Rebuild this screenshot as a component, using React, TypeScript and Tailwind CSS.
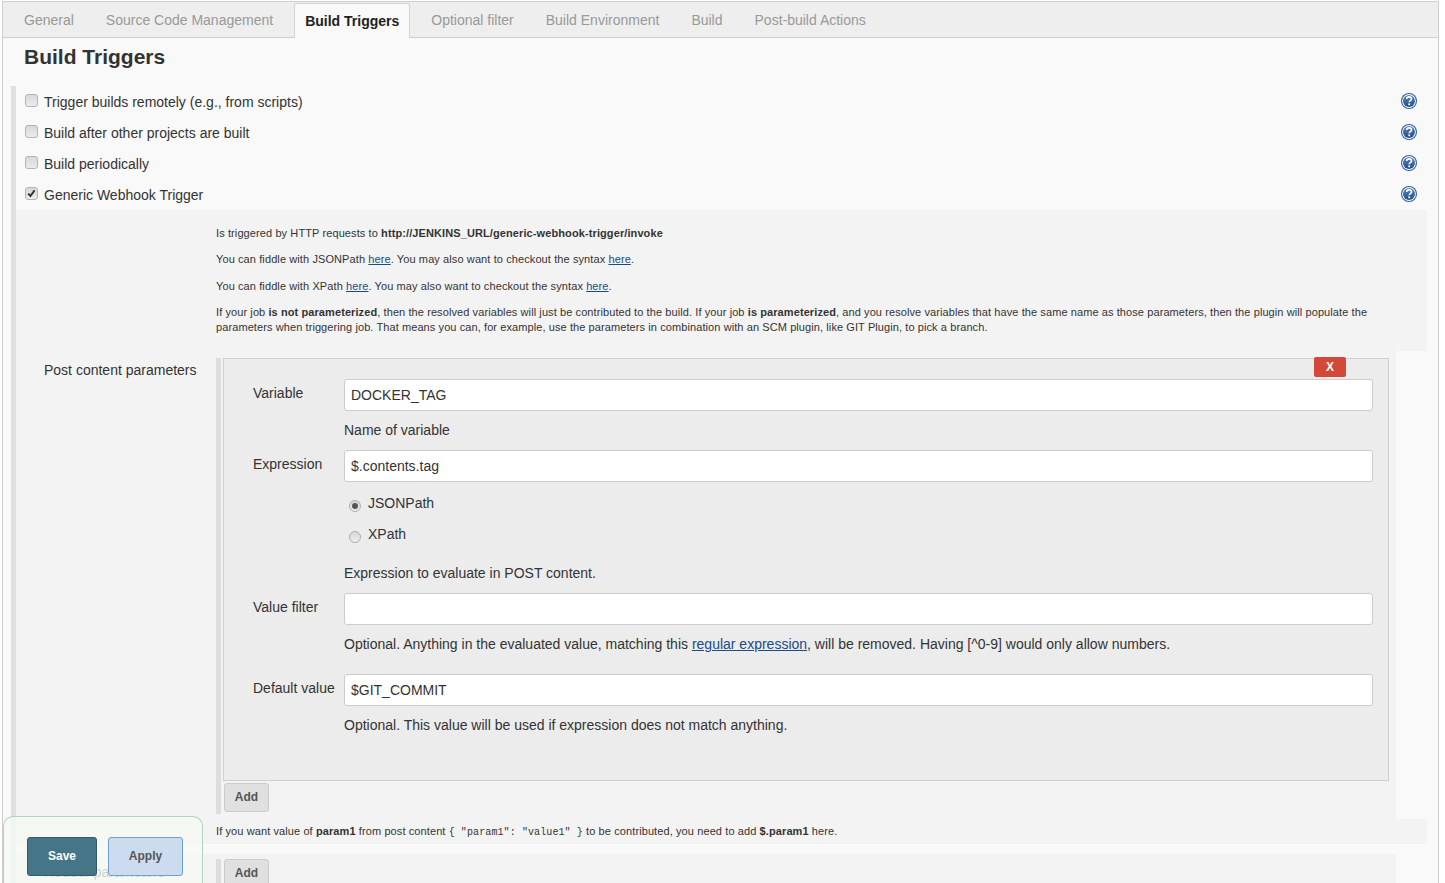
import type { ReactNode } from "react";

const tabs = [
  "General",
  "Source Code Management",
  "Build Triggers",
  "Optional filter",
  "Build Environment",
  "Build",
  "Post-build Actions",
];

const triggers = [
  { label: "Trigger builds remotely (e.g., from scripts)", checked: false },
  { label: "Build after other projects are built", checked: false },
  { label: "Build periodically", checked: false },
  { label: "Generic Webhook Trigger", checked: true },
];

function HelpIcon() {
  return (
    <svg width="16" height="16" viewBox="0 0 16 16" className="shrink-0 relative -top-[1px]">
      <defs>
        <linearGradient id="helpFill" x1="0" y1="0" x2="0" y2="1">
          <stop offset="0" stopColor="#5f86ba" />
          <stop offset="1" stopColor="#204c88" />
        </linearGradient>
      </defs>
      <circle cx="8" cy="8" r="8" fill="#2f5e9c" />
      <circle cx="8" cy="8" r="6.9" fill="#fff" />
      <circle cx="8" cy="8" r="6" fill="url(#helpFill)" />
      <path d="M5.6 6c.2-1.4 1.2-2.1 2.5-2.1 1.4 0 2.4.8 2.4 2 0 1.7-2.3 1.7-2.3 3.4" fill="none" stroke="#fff" strokeWidth="1.6" />
      <rect x="7.3" y="10.4" width="1.8" height="1.8" fill="#fff" />
    </svg>
  );
}

function CheckBox({ checked }: { checked: boolean }) {
  return (
    <span className="relative block w-[13px] h-[13px] rounded-[3px] border border-[#b5b5b5] bg-gradient-to-b from-[#d8d8d8] to-[#ececec]">
      {checked && (
        <svg width="11" height="11" viewBox="0 0 11 11" className="absolute left-0 top-0">
          <path d="M2.2 5.6l2.2 2.4 4.2-5.6" fill="none" stroke="#333" strokeWidth="2" />
        </svg>
      )}
    </span>
  );
}

function Radio({ label, checked }: { label: string; checked: boolean }) {
  return (
    <div className="h-[31px] flex items-center pl-[5px]">
      <span className="relative top-[2px] flex items-center justify-center w-[12px] h-[12px] rounded-full border border-[#aeaeae] bg-gradient-to-b from-[#d6d6d6] to-[#eeeeee]">
        {checked && <span className="block w-[6px] h-[6px] rounded-full bg-[#555]" />}
      </span>
      <span className="ml-[7px]">{label}</span>
    </div>
  );
}

function Input({ value }: { value: string }) {
  return (
    <div className="h-[32px] rounded-[3px] border border-[#ccc] bg-white px-[6px] flex items-center text-[#333]">
      {value}
    </div>
  );
}

function Field({
  label,
  value,
  desc,
  className,
  children,
}: {
  label: string;
  value: string;
  desc: ReactNode;
  className: string;
  children?: ReactNode;
}) {
  return (
    <div className={`flex ${className}`}>
      <div className="w-[91px] shrink-0 pt-[6px] leading-4">{label}</div>
      <div className="w-[1029px]">
        <Input value={value} />
        {children}
        <div className="leading-4 pt-[11px]">{desc}</div>
      </div>
    </div>
  );
}

function AddButton() {
  return (
    <div className="w-[45px] h-[29px] pb-[2px] rounded-[3px] border border-[#ccc] bg-[#e0e0e0] flex items-center justify-center text-[12px] font-bold text-[#555]">
      Add
    </div>
  );
}

const link = "text-[#204a87] underline";

export default function App() {
  return (
    <div className="relative h-[883px] overflow-hidden bg-white text-[14px] text-[#333] font-['Liberation_Sans',Arial,sans-serif]">
      <div className="ml-[2px] mt-[1px] w-[1437px] h-[882px] border-x border-t border-[#cfcfcf] bg-[#f9f9f9]">
        <div className="h-[36px] bg-[#eeeeee] border-b border-[#cfcfcf] flex pl-[5px] pt-[1px]">
          {tabs.map((tab) =>
            tab === "Build Triggers" ? (
              <div
                key={tab}
                className="mx-[5px] px-[10px] h-[35px] rounded-t-[3px] border border-b-0 border-[#d5d5d5] bg-[#f9f9f9] font-bold text-[#222] flex items-center"
              >
                {tab}
              </div>
            ) : (
              <div key={tab} className="mx-[5px] px-[11px] h-[35px] text-[#999] flex items-center">
                {tab}
              </div>
            )
          )}
        </div>

        <h2 className="h-[48px] pl-[21px] pt-[7px] text-[21px] leading-6 font-bold">Build Triggers</h2>

        <div className="ml-[8px] mr-[11px] border-l-[5px] border-[#e0e0e0]">
          {triggers.map((t) => (
            <div key={t.label} className="h-[31px] flex items-center pl-[9px] pr-[10px]">
              <span className="relative -top-[1px]">
                <CheckBox checked={t.checked} />
              </span>
              <span className="ml-[6px] flex-1 relative top-[1px]">{t.label}</span>
              <HelpIcon />
            </div>
          ))}

          <div className="bg-[#f3f3f3] pl-[200px] pr-[50px] pt-[16px] h-[141px] text-[11px] tracking-[0.1px] leading-[15px]">
            <p className="mb-[11px]">
              Is triggered by HTTP requests to <b>http://JENKINS_URL/generic-webhook-trigger/invoke</b>
            </p>
            <p className="mb-[12px]">
              You can fiddle with JSONPath <a className={link}>here</a>. You may also want to checkout the syntax{" "}
              <a className={link}>here</a>.
            </p>
            <p className="mb-[11px]">
              You can fiddle with XPath <a className={link}>here</a>. You may also want to checkout the syntax{" "}
              <a className={link}>here</a>.
            </p>
            <p className="tracking-[0.09px]">
              If your job <b>is not parameterized</b>, then the resolved variables will just be contributed to the
              build. If your job <b>is parameterized</b>, and you resolve variables that have the same name as those
              parameters, then the plugin will populate the parameters when triggering job. That means you can, for
              example, use the parameters in combination with an SCM plugin, like GIT Plugin, to pick a branch.
            </p>
          </div>

          <div className="mr-[31px] h-[468px] bg-[#f3f3f3] flex">
            <div className="w-[200px] shrink-0 pl-[28px] pt-[11px] leading-4">Post content parameters</div>
            <div className="mt-[7px] mb-[5px] border-l-[5px] border-[#dddddd] pl-[2px] w-[1173px]">
              <div className="relative h-[423px] border border-[#d0d0d0] bg-[#ececec] pt-[20px] pl-[29px]">
                <div className="absolute -top-[2px] right-[42px] w-[32px] h-[20px] rounded-[2px] bg-[#d24939] text-white font-bold text-[12px] flex items-center justify-center">
                  X
                </div>
                <Field label="Variable" value="DOCKER_TAG" desc="Name of variable" className="pb-[12px]" />
                <Field
                  label="Expression"
                  value="$.contents.tag"
                  desc="Expression to evaluate in POST content."
                  className="pb-[12px]"
                >
                  <div className="pt-[6px] pb-[4px]">
                    <Radio label="JSONPath" checked />
                    <Radio label="XPath" checked={false} />
                  </div>
                </Field>
                <Field
                  label="Value filter"
                  value=""
                  desc={
                    <>
                      Optional. Anything in the evaluated value, matching this{" "}
                      <a className={link}>regular expression</a>, will be removed. Having [^0-9] would only allow numbers.
                    </>
                  }
                  className="pb-[22px]"
                />
                <Field
                  label="Default value"
                  value="$GIT_COMMIT"
                  desc="Optional. This value will be used if expression does not match anything."
                  className=""
                />
              </div>
              <div className="pl-px pt-[2px]">
                <AddButton />
              </div>
            </div>
          </div>

          <div className="h-[25px] bg-[#f3f3f3] pl-[200px] pt-[5px] leading-[15px] text-[11px] tracking-[0.1px]">
            If you want value of <b>param1</b> from post content{" "}
            <code className="text-[10px] font-['Liberation_Mono',monospace]">{'{ "param1": "value1" }'}</code> to be
            contributed, you need to add <b>$.param1</b> here.
          </div>

          <div className="mt-[10px] mr-[31px] h-[40px] bg-[#f3f3f3] flex">
            <div className="w-[200px] shrink-0 pl-[28px] pt-[10px] leading-4">Header parameters</div>
            <div className="mt-[5px] border-l-[5px] border-[#dddddd] pl-[3px]">
              <AddButton />
            </div>
          </div>
        </div>
      </div>

      <div className="absolute left-[3px] bottom-0 w-[200px] h-[67px] rounded-t-[10px] border border-b-0 border-[#aed6bd] bg-[#f5f9f2]/80 flex gap-[11px] pl-[23px] pt-[20px]">
        <div className="w-[70px] h-[39px] pb-[2px] rounded-[3px] border border-[#33596a] bg-[#457688] text-white font-bold text-[12px] flex items-center justify-center">
          Save
        </div>
        <div className="w-[75px] h-[39px] pb-[2px] rounded-[3px] border border-[#6f9fd8] bg-[#ccdcee] text-[#555] font-bold text-[12px] flex items-center justify-center">
          Apply
        </div>
      </div>
    </div>
  );
}
